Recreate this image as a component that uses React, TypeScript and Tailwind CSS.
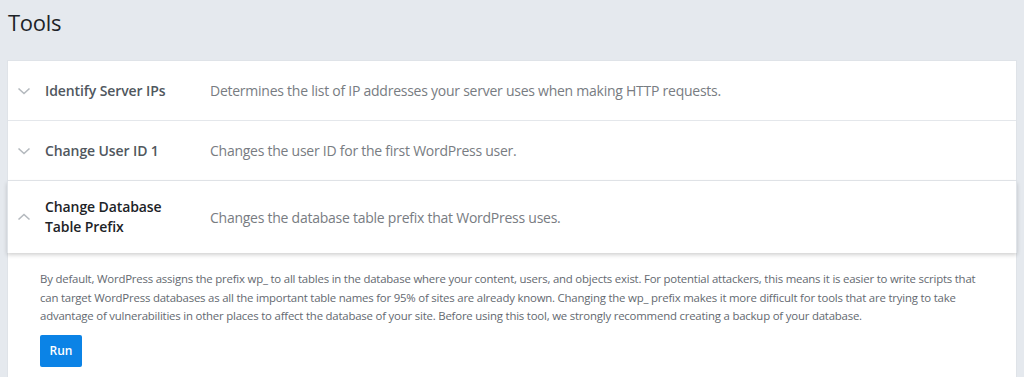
import React from 'react';

const tools = [
  { title: 'Identify Server IPs', desc: 'Determines the list of IP addresses your server uses when making HTTP requests.' },
  { title: 'Change User ID 1', desc: 'Changes the user ID for the first WordPress user.' },
];

const Chevron = ({ up }: { up?: boolean }) => (
  <svg width="14" height="14" viewBox="0 0 14 14" className="shrink-0">
    <polyline
      points={up ? '1.5,9.5 7,4.5 12.5,9.5' : '1.5,4.5 7,9.5 12.5,4.5'}
      fill="none"
      stroke="#b4b9be"
      strokeWidth="1.6"
    />
  </svg>
);

export default function App() {
  return (
    <div className="min-h-screen bg-[#e5e9ee] px-[7px] pt-[7px] font-['Open_Sans',sans-serif]">
      <h1 className="text-[22px] leading-[30px] text-[#1d2327] pl-px tracking-[-0.3px]">Tools</h1>
      <div className="mt-[23px] border border-[#dfe3e8] bg-white">
        {tools.map((t) => (
          <div key={t.title} className="flex items-center h-[60px] border-b border-[#e4e7eb] pl-[9px]">
            <Chevron />
            <div className="ml-[14px] w-[165px] shrink-0 text-[14px] font-semibold text-[#50575e] tracking-[-0.1px]">
              {t.title}
            </div>
            <div className="text-[14px] text-[#787c82] tracking-[-0.25px]">{t.desc}</div>
          </div>
        ))}
        <div className="relative z-10 -mx-px flex items-center h-[72px] bg-white pl-[9px] shadow-[0_2px_4px_rgba(0,0,0,0.18)] border-x border-[#dfe3e8]">
          <Chevron up />
          <div className="ml-[14px] w-[165px] shrink-0 pr-[40px] text-[14px] leading-[20px] font-semibold text-[#1d2327] tracking-[-0.1px]">
            Change Database Table Prefix
          </div>
          <div className="text-[14px] text-[#787c82] tracking-[-0.25px]">
            Changes the database table prefix that WordPress uses.
          </div>
        </div>
        <div className="pl-[32px] pr-[28px] pt-[17px] pb-[20px]">
          <p className="text-[11.4px] leading-[18.5px] text-[#646970] tracking-[-0.2px]">
            By default, WordPress assigns the prefix wp_ to all tables in the database where your content, users, and objects exist. For potential attackers, this means it is easier to write scripts that can target WordPress databases as all the important table names for 95% of sites are already known. Changing the wp_ prefix makes it more difficult for tools that are trying to take advantage of vulnerabilities in other places to affect the database of your site. Before using this tool, we strongly recommend creating a backup of your database.
          </p>
          <button className="mt-[9px] h-[32px] w-[42px] rounded-[2px] bg-[#0b83e6] text-[12px] font-semibold text-white">
            Run
          </button>
        </div>
      </div>
    </div>
  );
}
